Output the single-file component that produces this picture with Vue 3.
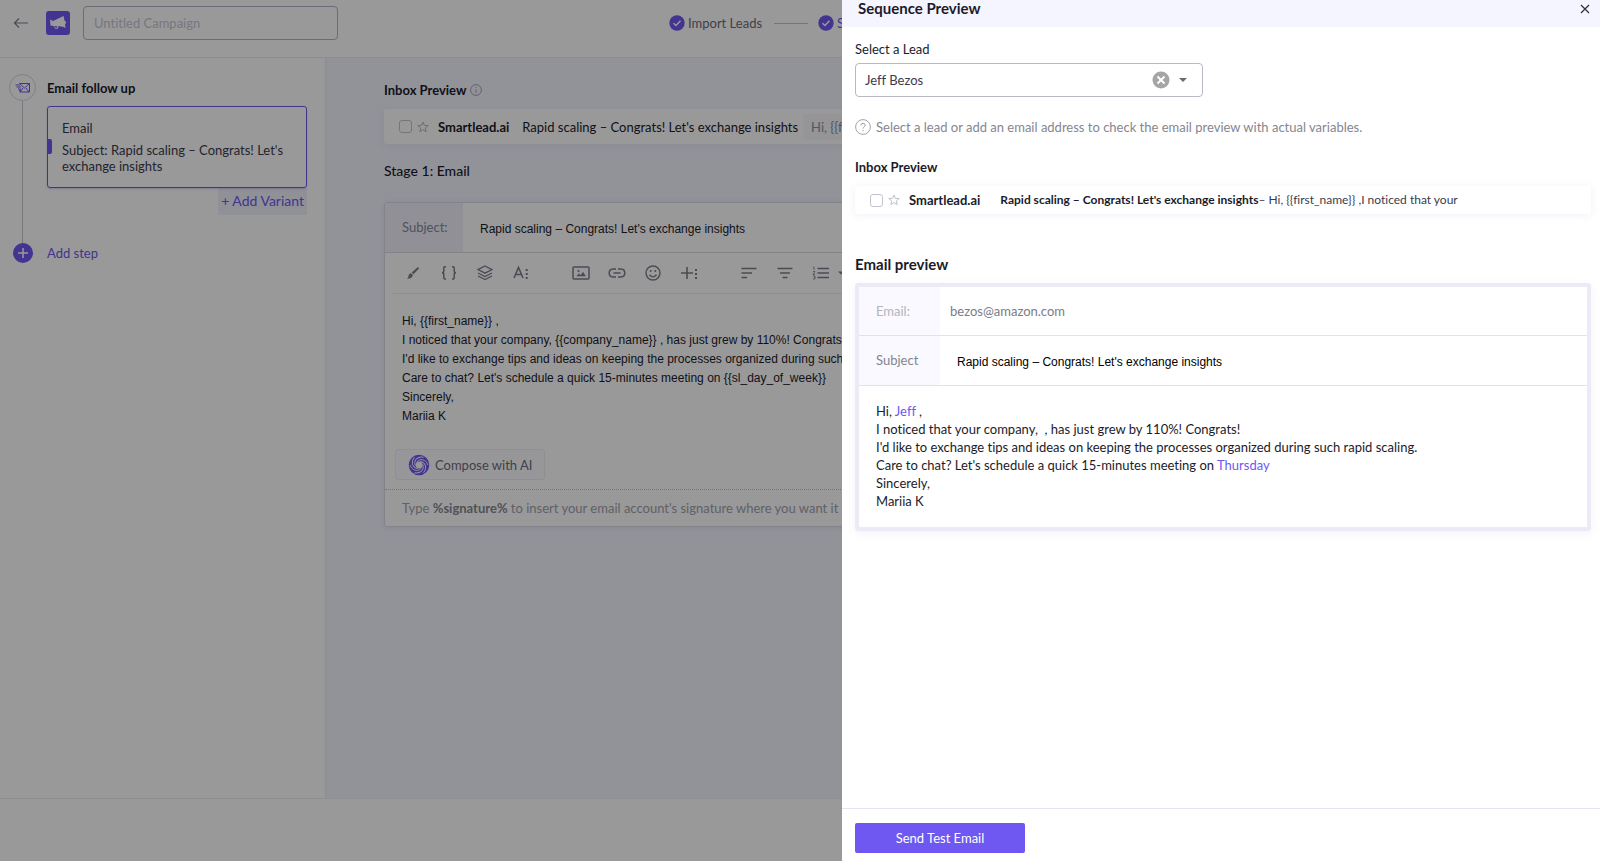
<script setup>
import { ref } from 'vue'

const campaign = ref('')
const lead = ref('Jeff Bezos')
const subject = ref("Rapid scaling – Congrats! Let's exchange insights")
const steps = ['Import Leads', 'Sequences']
const draft = [
  'Hi, {{first_name}} ,',
  'I noticed that your company, {{company_name}} , has just grew by 110%! Congrats!',
  "I'd like to exchange tips and ideas on keeping the processes organized during such rapid scaling.",
  "Care to chat? Let's schedule a quick 15-minutes meeting on {{sl_day_of_week}}",
  'Sincerely,',
  'Mariia K',
]
const blades = [0, 60, 120, 180, 240, 300]
</script>

<template>
  <div class="page">
    <header class="topbar">
      <div class="topbar-left">
        <button class="plain back" aria-label="Back">
          <svg width="16" height="12" viewBox="0 0 16 12" fill="none" stroke="#7d7f8e" stroke-width="1.2"><path d="M15 6H1.500M6 1.500L1.500 6L6 10.500" /></svg>
        </button>
        <span class="logo">
          <svg width="18" height="16" viewBox="0 0 18 16" fill="#fff"><path d="M1 4.500L4 6L13.500 1.500L14.500 0.800L15.500 5.500Q17 6 17 7.500Q17 8.500 16 9L16.500 13L14.500 12L9.500 11L9 13.500L6.500 14L4.500 11L1.500 10.500Z" /><path d="M5 11L6.500 12.800H8L8.300 11.300Z" fill="#7058f7" /></svg>
        </span>
        <input v-model="campaign" class="campaign" type="text" placeholder="Untitled Campaign" aria-label="Campaign name" />
      </div>
      <ol class="steps">
        <li v-for="(s, i) in steps" :key="s" :class="{ current: i === 1 }">
          <svg width="16" height="16" viewBox="0 0 16 16"><circle cx="8" cy="8" r="7.700" fill="#6e58f1" /><path d="M4.500 8.200L7 10.500L11.500 5.800" fill="none" stroke="#fff" stroke-width="1.500" /></svg>
          <span>{{ s }}</span>
        </li>
      </ol>
    </header>

    <div class="workspace">
      <aside class="sidebar">
        <div class="rail">
          <span class="rail-mail">
            <svg width="16" height="12" viewBox="0 0 16 12" fill="none" stroke="#6e58f1" stroke-width="1"><path d="M4.500 1.500H14.500V10H4.500M4.500 1.500L9.500 6L14.500 1.500M5 10L8 6M14 10L11 6M0.500 3H5M1.500 5H6M3 7H6M4 8.500H6" /></svg>
          </span>
          <span class="rail-line"></span>
          <button class="rail-plus" aria-label="Add step">
            <svg width="12" height="12" viewBox="0 0 12 12" stroke="#fff" stroke-width="1.500"><path d="M6 1V11M1 6H11" /></svg>
          </button>
        </div>
        <div class="stage">
          <h2>Email follow up</h2>
          <div class="variant">
            <p>Email</p>
            <p>Subject: {{ subject }}</p>
          </div>
          <button class="add-variant">+ Add Variant</button>
          <button class="plain add-step">Add step</button>
        </div>
      </aside>

      <main class="content">
        <h2 class="with-info">Inbox Preview
          <svg width="12" height="12" viewBox="0 0 12 12" fill="none" stroke="#a2a3ae"><circle cx="6" cy="6" r="5.400" /><path d="M6 5.200V9M6 3V4" /></svg>
        </h2>
        <div class="inbox-row">
          <input type="checkbox" aria-label="Select message" />
          <svg class="star" width="12" height="12" viewBox="0 0 12 12" fill="none" stroke="#b8b9c8"><path d="M6 1L7.400 4.400L11.200 4.600L8.300 7L9.200 10.700L6 8.700L2.800 10.700L3.700 7L0.800 4.600L4.600 4.400Z" /></svg>
          <strong>Smartlead.ai</strong>
          <span class="inbox-subject">{{ subject }}</span>
          <span class="chip">Hi, {{ '{\{first_name}\}' }}</span>
        </div>
        <h3>Stage 1: Email</h3>

        <section class="editor">
          <div class="subject-line">
            <label for="subject">Subject:</label>
            <input id="subject" v-model="subject" type="text" />
          </div>
          <div class="toolbar">
            <div class="tools">
              <button class="plain" aria-label="Format painter"><svg width="20" height="20" viewBox="0 0 20 20" fill="#7d7e8e"><path d="M15 4L16.200 5.200L10.500 11.300L8.700 9.500ZM8 10.200L9.900 12Q9.500 15.500 4 15.700Q5.800 14.500 5.600 12.500Q6 10.200 8 10.200Z" /></svg></button>
              <button class="plain" aria-label="Variables"><svg width="20" height="20" viewBox="0 0 20 20" fill="none" stroke="#7d7e8e" stroke-width="1.500"><path d="M7 3.700H5.800Q4.800 3.700 4.800 5V8Q4.800 9.800 3 9.800Q4.800 9.800 4.800 11.500V14.500Q4.800 16 5.800 16H7M13 3.700H14.200Q15.200 3.700 15.200 5V8Q15.200 9.800 17 9.800Q15.200 9.800 15.200 11.500V14.500Q15.200 16 14.200 16H13" /></svg></button>
              <button class="plain" aria-label="Templates"><svg width="20" height="20" viewBox="0 0 20 20" fill="none" stroke="#7d7e8e" stroke-width="1.300"><path d="M10 3L17 6.600L10 10.200L3 6.600ZM3 10L10 13.600L17 10M3 13L10 16.600L17 13" /></svg></button>
              <button class="plain" aria-label="More text"><svg width="20" height="20" viewBox="0 0 20 20" fill="none" stroke="#7d7e8e" stroke-width="1.600"><path d="M3 15L7.500 4.500L12 15M4.800 11.500H10.200" /><path d="M15.700 6V16" stroke-width="2" stroke-dasharray="2 2" /></svg></button>
            </div>
            <div class="tools">
              <button class="plain" aria-label="Insert image"><svg width="20" height="20" viewBox="0 0 20 20" fill="none" stroke="#7d7e8e" stroke-width="1.500"><rect x="2" y="4" width="16" height="12" rx="1" /><path d="M5.500 13.200L8 10.200L9.700 12.200L12 8.800L14.800 13.200Z" fill="#7d7e8e" stroke="none" /><circle cx="7.500" cy="8" r="1.100" fill="#7d7e8e" stroke="none" /></svg></button>
              <button class="plain" aria-label="Insert link"><svg width="20" height="20" viewBox="0 0 20 20" fill="none" stroke="#7d7e8e" stroke-width="1.500"><path d="M9 6H6Q2.200 6.200 2.200 10Q2.200 13.800 6 14H9M11 6H14Q17.800 6.200 17.800 10Q17.800 13.800 14 14H11M6.500 10H13.500" /></svg></button>
              <button class="plain" aria-label="Emoji"><svg width="20" height="20" viewBox="0 0 20 20" fill="none" stroke="#7d7e8e" stroke-width="1.400"><circle cx="10" cy="10" r="7" /><path d="M6.500 11.800Q10 16 13.500 11.800" /><circle cx="7.700" cy="8" r="1" fill="#7d7e8e" stroke="none" /><circle cx="12.300" cy="8" r="1" fill="#7d7e8e" stroke="none" /></svg></button>
              <button class="plain" aria-label="More inserts"><svg width="20" height="20" viewBox="0 0 20 20" fill="none" stroke="#7d7e8e" stroke-width="1.600"><path d="M8 4V16M2 10H14" /><path d="M17 6V16" stroke-width="2" stroke-dasharray="2 2" /></svg></button>
            </div>
            <div class="tools">
              <button class="plain" aria-label="Align left"><svg width="20" height="20" viewBox="0 0 20 20" stroke="#7d7e8e" stroke-width="1.500"><path d="M2.500 5.500H17.500M2.500 10H13M2.500 14.500H8" /></svg></button>
              <button class="plain" aria-label="Align"><svg width="20" height="20" viewBox="0 0 20 20" stroke="#7d7e8e" stroke-width="1.500"><path d="M2.500 5.500H17.500M5 10H15M7.500 14.500H12.500" /></svg></button>
              <button class="plain" aria-label="Ordered list"><svg width="20" height="20" viewBox="0 0 20 20" fill="none" stroke="#7d7e8e" stroke-width="1.500"><path d="M6.500 5.500H18M6.500 10H18M6.500 14.500H18" /><path d="M2 4H3V7M2 8.500H4L2 11.500H4M2 13H4V16H2M3 14.500H4" stroke-width="0.800" /></svg></button>
              <button class="plain caret" aria-label="List options"><svg width="8" height="20" viewBox="0 0 8 20" fill="#7d7e8e"><path d="M1 8.500H7L4 11.500Z" /></svg></button>
            </div>
          </div>
          <div class="draft"><p v-for="line in draft" :key="line">{{ line }}</p></div>
          <button class="compose">
            <svg width="22" height="22" viewBox="0 0 22 22"><circle cx="11" cy="11" r="6.900" fill="none" stroke="#6e58f1" stroke-width="6.800" /><path v-for="b in blades" :key="b" d="M8.500 8.200Q12 4 16.500 6.500Q19 8 20 11" :transform="`rotate(${b} 11 11)`" fill="none" stroke="#fff" stroke-width="0.900" /></svg>
            Compose with AI
          </button>
          <p class="signature">Type <b>%signature%</b> to insert your email account's signature where you want it added</p>
        </section>
      </main>
    </div>
    <footer class="page-footer"></footer>

    <div class="backdrop"></div>

    <section class="drawer" role="dialog" aria-labelledby="drawer-title">
      <header class="drawer-head">
        <h1 id="drawer-title">Sequence Preview</h1>
        <button class="plain" aria-label="Close">
          <svg width="10" height="10" viewBox="0 0 10 10" stroke="#333340" stroke-width="1.300"><path d="M1 1L9 9M9 1L1 9" /></svg>
        </button>
      </header>
      <div class="drawer-body">
        <label class="lead-label" for="lead">Select a Lead</label>
        <div class="lead-box">
          <select id="lead" v-model="lead"><option>Jeff Bezos</option></select>
          <button class="plain clear" aria-label="Clear lead">
            <svg width="18" height="18" viewBox="0 0 18 18"><circle cx="9" cy="9" r="8.500" fill="#a5a5a8" /><path d="M5.500 5.500L12.500 12.500M12.500 5.500L5.500 12.500" stroke="#fff" stroke-width="2" /></svg>
          </button>
          <svg class="arrow" width="8" height="4" viewBox="0 0 8 4"><path d="M0 0H8L4 4Z" fill="#6a6a72" /></svg>
        </div>
        <p class="hint">
          <svg width="16" height="16" viewBox="0 0 16 16" fill="none" stroke="#a2a3ac"><circle cx="8" cy="8" r="7.400" /><path d="M5.800 6.400Q5.900 4.300 8 4.300Q10.200 4.300 10.200 6.200Q10.200 7.200 9 7.900Q8 8.500 8 9.600M8 11V12.200" /></svg>
          Select a lead or add an email address to check the email preview with actual variables.
        </p>
        <h2>Inbox Preview</h2>
        <div class="inbox-row preview-row">
          <input type="checkbox" aria-label="Select message" />
          <svg class="star" width="12" height="12" viewBox="0 0 12 12" fill="none" stroke="#c0c1cc"><path d="M6 1L7.400 4.400L11.200 4.600L8.300 7L9.200 10.700L6 8.700L2.800 10.700L3.700 7L0.800 4.600L4.600 4.400Z" /></svg>
          <strong>Smartlead.ai</strong>
          <span class="snippet"><b>{{ subject }}</b>– Hi, {{ '{\{first_name}\}' }} ,I noticed that your</span>
        </div>
        <h2 class="email-title">Email preview</h2>
        <article class="email">
          <dl>
            <div><dt class="faint">Email:</dt><dd>bezos@amazon.com</dd></div>
            <div><dt>Subject</dt><dd class="email-subject">{{ subject }}</dd></div>
          </dl>
          <div class="message">
            <p>Hi, <span>Jeff</span> ,</p>
            <p>I noticed that your company, &nbsp;, has just grew by 110%! Congrats!</p>
            <p>I'd like to exchange tips and ideas on keeping the processes organized during such rapid scaling.</p>
            <p>Care to chat? Let's schedule a quick 15-minutes meeting on <span>Thursday</span></p>
            <p>Sincerely,</p>
            <p>Mariia K</p>
          </div>
        </article>
      </div>
      <footer class="drawer-foot"><button>Send Test Email</button></footer>
    </section>
  </div>
</template>

<style>
body { background: #fff; }
</style>

<style scoped>
* { box-sizing: border-box; }
.page {
  position: relative;
  display: flex;
  flex-direction: column;
  min-height: 100vh;
  overflow: hidden;
  font: 13px/16px Lato, "Open Sans", sans-serif;
  font-variant-ligatures: none;
  color: #1b1b2b;
}
h1, h2, h3, p, ol, dl, dd { margin: 0; padding: 0; }
h2 { font-size: 13px; font-weight: 700; line-height: 16px; }
button, input, select { font: inherit; font-variant-ligatures: none; color: inherit; }
button { cursor: pointer; }
svg { display: block; flex: none; }
.plain { display: flex; padding: 0; border: 0; background: none; }

.topbar { display: flex; height: 58px; border-bottom: 1px solid #ececf2; }
.topbar-left { display: flex; align-items: center; flex: 0 0 669px; height: 46px; padding-left: 13px; }
.back { margin-right: 17px; }
.logo { display: grid; place-items: center; width: 24px; height: 24px; margin-right: 13px; border-radius: 3px; background: #6e58f1; }
.campaign { width: 255px; height: 34px; padding: 0 10px; border: 1px solid #b4b5c2; border-radius: 4px; background: transparent; outline: none; }
.campaign::placeholder { color: #c6c7d2; opacity: 1; }
.steps { display: flex; height: 46px; list-style: none; color: #6b6c7b; }
.steps li { display: flex; align-items: center; gap: 3px; white-space: nowrap; }
.steps li + li::before { content: ""; width: 34px; height: 1px; margin: 0 7px 0 12px; background: #c4c5cf; }
.steps .current { color: #6e58f1; }

.workspace { display: flex; flex: 1; }
.sidebar { display: flex; flex: 0 0 325px; gap: 11px; padding: 16px 18px 0 9px; }
.rail { display: flex; flex-direction: column; align-items: center; width: 27px; height: 189px; }
.rail-mail { display: grid; place-items: center; width: 27px; height: 27px; border: 1px solid #d4d5e2; border-radius: 50%; }
.rail-line { flex: 1; width: 1px; background: #c8c9d2; }
.rail-plus { display: grid; place-items: center; width: 20px; height: 20px; padding: 0; border: 0; border-radius: 50%; background: #6e58f1; }
.stage { display: flex; flex-direction: column; flex: 1; padding-top: 6px; }
.variant { position: relative; display: flex; flex-direction: column; gap: 6px; min-height: 82px; margin-top: 10px; padding: 13px 14px; border: 1px solid #6e58f1; border-radius: 3px; box-shadow: 0 1px 2px rgba(110, 88, 241, 0.3); color: #3b3b4b; }
.variant::before { content: ""; position: absolute; left: 0; top: 32px; width: 4px; height: 15px; border-radius: 0 2px 2px 0; background: #6e58f1; }
.add-variant { align-self: flex-end; height: 27px; padding: 0 3px 2px; border: 0; border-radius: 2px; background: #f0f1fc; color: #6e58f1; font-size: 14px; line-height: 18px; }
.add-step { align-self: flex-start; margin-top: 30px; color: #6e58f1; }

.content { flex: 1; min-width: 0; padding: 24px 8px 0 58px; border-left: 1px solid #ebecf5; background: #f4f5ff; }
.with-info { display: flex; align-items: center; gap: 4px; }
.inbox-row { display: flex; align-items: center; height: 35px; margin-top: 11px; padding-left: 15px; border-radius: 3px; background: #fff; box-shadow: 0 2px 8px rgba(110, 110, 190, 0.1); white-space: nowrap; }
.inbox-row input { appearance: none; flex: none; width: 13px; height: 13px; margin: 0 5px 0 0; border: 1px solid #c2c3d0; border-radius: 3px; }
.inbox-row strong { margin: 0 13px 0 9px; }
.chip { margin-left: 5px; padding: 5px 8px; border-radius: 3px; background: #f8f8fc; color: #8d8e9b; }
h3 { margin-top: 18px; font-size: 14px; font-weight: 500; line-height: 18px; }
.editor { margin-top: 22px; border: 1px solid #dadbe6; border-radius: 3px; background: #fff; box-shadow: 0 1px 6px rgba(110, 110, 190, 0.15); white-space: nowrap; overflow: hidden; }
.subject-line { display: flex; height: 50px; border-bottom: 1px solid #dadbe6; }
.subject-line label { width: 78px; padding: 16px 0 0 17px; background: #f0f1fb; color: #878897; }
.subject-line input { flex: 1; padding: 2px 17px 0; border: 0; outline: none; background: transparent; font: 12px/16px "Liberation Sans", Arial, sans-serif; }
.toolbar { display: flex; gap: 40px; height: 41px; margin-left: 8px; padding-left: 10px; border-bottom: 1px solid #ebebf4; }
.tools { display: flex; align-items: center; gap: 16px; }
.caret { margin-left: -10px; }
.draft { padding: 18px 17px 0; font: 12px/19px "Liberation Sans", Arial, sans-serif; }
.compose { display: flex; align-items: center; gap: 5px; height: 31px; margin: 23px 0 9px 10px; padding: 0 12px; border: 1px solid #edeef8; border-radius: 3px; background: #fcfcff; color: #6b6c7b; }
.signature { padding: 10px 17px; border-top: 1px dotted #c0c1cc; color: #a0a1ac; }
.signature b { color: #878893; }
.page-footer { height: 63px; border-top: 1px solid #ededf0; }

.backdrop { position: absolute; inset: 0; background: rgba(0, 0, 0, 0.4); }

.drawer { position: absolute; top: 0; right: 0; bottom: 0; display: flex; flex-direction: column; width: calc(50% - 42px); background: #fff; }
.drawer-head { display: flex; align-items: flex-start; justify-content: space-between; height: 27px; padding: 0 10px 0 16px; background: #f5f5ff; }
.drawer-head h1 { font-size: 15px; line-height: 16px; font-weight: 700; }
.drawer-head .plain { padding-top: 4px; }
.drawer-body { flex: 1; padding: 14px 9px 0 13px; }
.lead-label { display: block; }
.lead-box { position: relative; display: flex; align-items: center; width: 348px; margin-top: 6px; }
.lead-box select { appearance: none; width: 100%; height: 34px; padding: 0 60px 0 9px; border: 1px solid #b8b9c1; border-radius: 4px; background: #fff; color: #3b3b4b; outline: none; }
.clear { position: absolute; right: 33px; }
.arrow { position: absolute; right: 16px; pointer-events: none; }
.hint { display: flex; align-items: center; gap: 5px; margin: 22px 0 24px; color: #85868f; white-space: nowrap; }
.preview-row { height: 28px; box-shadow: 0 1px 8px rgba(110, 110, 190, 0.1); }
.preview-row strong { margin-right: 20px; }
.snippet { font-size: 12px; color: #3b3b4b; }
.snippet b { color: #1b1b2b; }
.email-title { margin-top: 41px; font-size: 15px; line-height: 18px; }
.email { margin-top: 10px; border: 4px solid #ecebf5; border-radius: 3px; box-shadow: 0 3px 10px rgba(110, 110, 190, 0.08); }
.email dl div { display: flex; height: 49px; border-bottom: 1px solid #e2e2ea; }
.email dl div + div { height: 50px; }
.email dt { width: 81px; padding: 16px 0 0 17px; background: #f9f9ff; color: #83848f; }
.email .faint { color: #b4b5bd; }
.email dd { padding: 16px 10px 0; color: #7b7c86; }
.email .email-subject { padding: 18px 17px 0; color: #000; font: 12px/16px "Liberation Sans", Arial, sans-serif; }
.message { padding: 16px 17px 17px; line-height: 18px; }
.message span { color: #6e58f1; }
.drawer-foot { height: 53px; padding: 14px 13px 0; border-top: 1px solid #e4e4ed; }
.drawer-foot button { width: 170px; height: 30px; border: 0; border-radius: 2px; background: #6e58f1; color: #fff; }
</style>
